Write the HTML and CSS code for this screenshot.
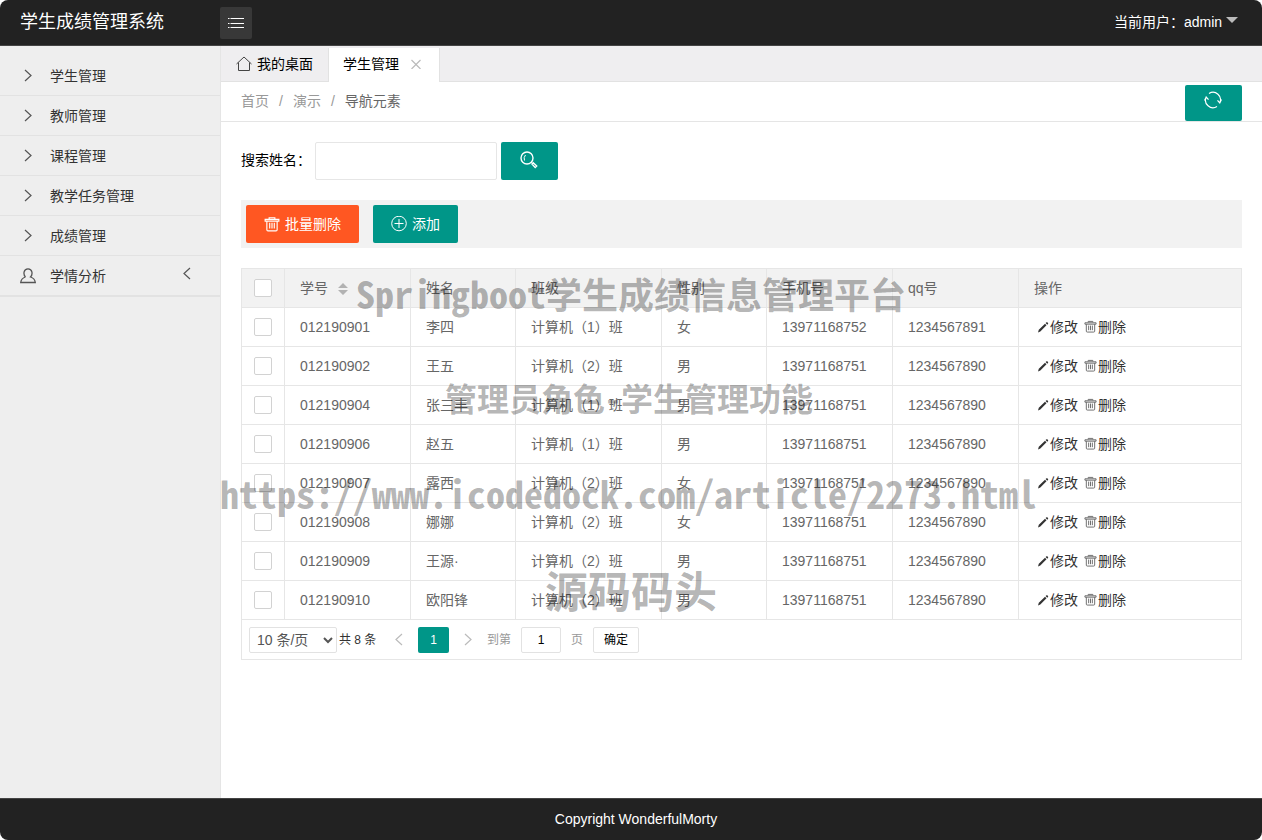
FILE: index.html
```html
<!DOCTYPE html>
<html lang="zh-CN">
<head>
<meta charset="utf-8">
<title>学生成绩管理系统</title>
<link rel="stylesheet" href="styles.css">
</head>
<body>
<svg class="defs" aria-hidden="true">
  <symbol id="right" viewBox="0 0 16 16"><path d="M5 2l6 5.500-6 5.500" fill="none" stroke="currentColor" stroke-width="1.200"/></symbol>
  <symbol id="left" viewBox="0 0 16 16"><path d="M11 2L5 7.500l6 5.500" fill="none" stroke="currentColor" stroke-width="1.200"/></symbol>
  <symbol id="pencil" viewBox="0 0 14 14"><path d="M2 12.500l.8-2.700L9 3.700l1.500 1.500-6.200 6.200zM9.600 3.100l.9-.8q.4-.3.800 0l.7.7q.4.400 0 .9l-.8.800z" fill="currentColor"/></symbol>
  <symbol id="trash" viewBox="0 0 14 14"><path d="M4.500 2.500v-1h5v1M1 3h12v1.500H1zM2.500 4.500v7.500q0 1 1 1h7q1 0 1-1V4.500M5 6v5M7 6v5M9 6v5" fill="none" stroke="currentColor"/></symbol>
</svg>
<header class="topbar">
  <h1 class="brand">学生成绩管理系统</h1>
  <button class="menu-toggle" aria-label="切换菜单">
    <svg viewBox="0 0 18 12"><path d="M3.500 1.500H17M3.500 6.500H17M3.500 10.500H17M1 1.500h1.500M1 6.500h1.500M1 10.500h1.500" stroke="currentColor" fill="none"/></svg>
  </button>
  <a class="user" href="#">当前用户：admin <span class="caret"></span></a>
</header>
<div class="layout">
  <nav class="sidebar">
    <a href="#"><svg><use href="#right"/></svg>学生管理</a>
    <a href="#"><svg><use href="#right"/></svg>教师管理</a>
    <a href="#"><svg><use href="#right"/></svg>课程管理</a>
    <a href="#"><svg><use href="#right"/></svg>教学任务管理</a>
    <a href="#"><svg><use href="#right"/></svg>成绩管理</a>
    <a href="#"><svg viewBox="0 0 16 16"><path d="M5.500 9C3 6.500 3.500 .8 8 .8S13 6.500 10.500 9c2.500.8 4.500 3 4.800 5.500H.7C1 12 3 9.800 5.500 9" fill="none" stroke="currentColor" stroke-width="1.300"/></svg>学情分析<svg class="fold"><use href="#left"/></svg></a>
  </nav>
  <main class="main">
    <div class="tabs">
      <a class="tab" href="#"><svg viewBox="0 0 16 16"><path d="M.5 8L8 1l7.500 7M2.500 6.500v8h11v-8" fill="none" stroke="currentColor"/></svg>我的桌面</a>
      <a class="tab active" href="#">学生管理<svg class="close" viewBox="0 0 10 10"><path d="M.5 1l9 9M9.500 1l-9 9" fill="none" stroke="currentColor" stroke-width="1.200"/></svg></a>
    </div>
    <div class="crumbs">
      <a href="#">首页</a><span>/</span><a href="#">演示</a><span>/</span><a class="current" href="#">导航元素</a>
      <button class="btn icon-btn refresh" aria-label="刷新"><svg viewBox="0 0 18 18"><path d="M5 2.500A7.500 7.500 0 0 1 15.800 12M13 15.500A7.500 7.500 0 0 1 2.200 6M.5 9.500l1.700-3.500 2.300 2.700M17.500 8.500L15.800 12l-2.300-2.700" fill="none" stroke="currentColor" stroke-width="1.200"/></svg></button>
    </div>
    <div class="content">
      <form class="search">
        <label for="name">搜索姓名：</label>
        <input id="name" type="text">
        <button class="btn icon-btn" type="button" aria-label="搜索"><svg viewBox="0 0 18 18"><circle cx="7" cy="7" r="6" fill="none" stroke="currentColor" stroke-width="1.400"/><path d="M4.500 9.500Q3.300 6.500 5.500 4M11.200 11.200l1.300 1.300" fill="none" stroke="currentColor"/><path d="M12 13l1.200-1.200 3.500 3.300-1.500 1.500z" fill="none" stroke="currentColor" stroke-width="1.400"/></svg></button>
      </form>
      <div class="toolbar">
        <button class="btn danger"><svg><use href="#trash"/></svg>批量删除</button>
        <button class="btn"><svg viewBox="0 0 16 16"><circle cx="8" cy="7.500" r="7.300" fill="none" stroke="currentColor"/><path d="M8 3v9M3.500 7.500h9" stroke="currentColor"/></svg>添加</button>
      </div>
      <section class="grid">
        <table>
          <colgroup><col class="w-check"><col class="w-long"><col class="w-short"><col class="w-class"><col class="w-short"><col class="w-long"><col class="w-long"><col></colgroup>
          <thead><tr><th><input type="checkbox" aria-label="全选"></th><th>学号<svg class="sort" viewBox="0 0 10 12"><path d="M0 5l5-5 5 5zM0 7h10l-5 5z" fill="currentColor"/></svg></th><th>姓名</th><th>班级</th><th>性别</th><th>手机号</th><th>qq号</th><th>操作</th></tr></thead>
          <tbody>
            <tr><td><input type="checkbox" aria-label="选择"></td><td>012190901</td><td>李四</td><td>计算机（1）班</td><td>女</td><td>13971168752</td><td>1234567891</td><td><a href="#"><svg><use href="#pencil"/></svg>修改</a><a href="#"><svg class="bin"><use href="#trash"/></svg>删除</a></td></tr>
            <tr><td><input type="checkbox" aria-label="选择"></td><td>012190902</td><td>王五</td><td>计算机（2）班</td><td>男</td><td>13971168751</td><td>1234567890</td><td><a href="#"><svg><use href="#pencil"/></svg>修改</a><a href="#"><svg class="bin"><use href="#trash"/></svg>删除</a></td></tr>
            <tr><td><input type="checkbox" aria-label="选择"></td><td>012190904</td><td>张三丰</td><td>计算机（1）班</td><td>男</td><td>13971168751</td><td>1234567890</td><td><a href="#"><svg><use href="#pencil"/></svg>修改</a><a href="#"><svg class="bin"><use href="#trash"/></svg>删除</a></td></tr>
            <tr><td><input type="checkbox" aria-label="选择"></td><td>012190906</td><td>赵五</td><td>计算机（1）班</td><td>男</td><td>13971168751</td><td>1234567890</td><td><a href="#"><svg><use href="#pencil"/></svg>修改</a><a href="#"><svg class="bin"><use href="#trash"/></svg>删除</a></td></tr>
            <tr><td><input type="checkbox" aria-label="选择"></td><td>012190907</td><td>露西</td><td>计算机（2）班</td><td>女</td><td>13971168751</td><td>1234567890</td><td><a href="#"><svg><use href="#pencil"/></svg>修改</a><a href="#"><svg class="bin"><use href="#trash"/></svg>删除</a></td></tr>
            <tr><td><input type="checkbox" aria-label="选择"></td><td>012190908</td><td>娜娜</td><td>计算机（2）班</td><td>女</td><td>13971168751</td><td>1234567890</td><td><a href="#"><svg><use href="#pencil"/></svg>修改</a><a href="#"><svg class="bin"><use href="#trash"/></svg>删除</a></td></tr>
            <tr><td><input type="checkbox" aria-label="选择"></td><td>012190909</td><td>王源·</td><td>计算机（2）班</td><td>男</td><td>13971168751</td><td>1234567890</td><td><a href="#"><svg><use href="#pencil"/></svg>修改</a><a href="#"><svg class="bin"><use href="#trash"/></svg>删除</a></td></tr>
            <tr><td><input type="checkbox" aria-label="选择"></td><td>012190910</td><td>欧阳锋</td><td>计算机（2）班</td><td>男</td><td>13971168751</td><td>1234567890</td><td><a href="#"><svg><use href="#pencil"/></svg>修改</a><a href="#"><svg class="bin"><use href="#trash"/></svg>删除</a></td></tr>
          </tbody>
        </table>
        <div class="pager">
          <select aria-label="每页条数"><option>10 条/页</option></select>
          <span class="total">共 8 条</span>
          <button class="arrow" aria-label="上一页"><svg><use href="#left"/></svg></button>
          <button class="page">1</button>
          <button class="arrow" aria-label="下一页"><svg><use href="#right"/></svg></button>
          <label for="page">到第</label>
          <input id="page" type="text" value="1">
          <label for="page">页</label>
          <button class="go">确定</button>
        </div>
      </section>
    </div>
  </main>
</div>
<footer class="footer">Copyright WonderfulMorty</footer>
<div class="watermark w1"><span>Springboot</span>学生成绩信息管理平台</div>
<div class="watermark w2">管理员角色-学生管理功能</div>
<div class="watermark w3"><span>https://www.icodedock.com/article/2273.html</span></div>
<div class="watermark w4">源码码头</div>
</body>
</html>
```
FILE: styles.css
```css
* { box-sizing: border-box; }
html { background: #fff; }
body {
  position: relative;
  margin: 0;
  min-height: 100vh;
  display: flex;
  flex-direction: column;
  border-radius: 8px;
  overflow: hidden;
  font: 14px/20px "Liberation Sans", "Noto Sans CJK SC", sans-serif;
  color: #000;
}
button, input, select { font: inherit; margin: 0; }
button { border: 0; padding: 0; cursor: pointer; }
a { color: inherit; text-decoration: none; }
svg { width: 16px; height: 16px; flex: none; }
.defs { position: absolute; width: 0; height: 0; }

.topbar {
  display: flex;
  height: 46px;
  background: #222;
  border-bottom: 1px solid #444;
  color: #fff;
}
.brand { width: 220px; margin: 0; padding-left: 20px; font-size: 18px; font-weight: 400; line-height: 44px; }
.menu-toggle {
  display: grid;
  place-items: center;
  width: 32px;
  height: 32px;
  margin-top: 7px;
  border-radius: 2px;
  background: #383838;
  color: #fff;
}
.menu-toggle svg { width: 18px; height: 12px; }
.user { margin-left: auto; padding-right: 24px; line-height: 45px; }
.caret {
  display: inline-block;
  border: 6px solid transparent;
  border-top-color: #bbb;
  border-bottom: 0;
  vertical-align: 4px;
}

.layout { flex: 1; display: flex; }
.sidebar { width: 221px; padding-top: 10px; background: #eee; border-right: 1px solid #e5e5e5; color: #333; }
.sidebar a {
  display: flex;
  align-items: center;
  gap: 14px;
  height: 40px;
  padding: 0 25px 0 20px;
  border-bottom: 1px solid #e2e2e2;
}
.sidebar a:last-child { height: 41px; border-bottom-width: 2px; }
.sidebar svg { color: #555; }
.sidebar .fold { margin: 0 0 4px auto; }

.main { flex: 1; min-width: 0; }
.tabs { display: flex; height: 36px; padding-top: 2px; background: #efeef0; border-bottom: 1px solid #e2e2e2; }
.tab { display: flex; align-items: center; gap: 5px; height: 33px; padding: 0 15px 2px; border-right: 1px solid #e2e2e2; }
.tab svg { color: #444; }
.tab.active { height: 34px; gap: 12px; padding: 0 18px 2px 14px; background: #fff; }
.tab .close { width: 10px; height: 10px; color: #bbb; }
.crumbs {
  display: flex;
  align-items: center;
  gap: 10px;
  height: 40px;
  padding: 0 20px 2px;
  border-bottom: 1px solid #e5e5e5;
  color: #999;
}
.crumbs .current { color: #666; }

.btn {
  display: inline-flex;
  align-items: center;
  justify-content: center;
  gap: 5px;
  height: 38px;
  padding: 0 18px;
  border-radius: 2px;
  background: #009688;
  color: #fff;
}
.btn.danger { background: #ff5722; }
.icon-btn { width: 57px; padding: 0 2px 2px 0; }
.icon-btn svg { width: 18px; height: 18px; }
.refresh { align-self: flex-start; height: 36px; margin: 3px 0 0 auto; padding-bottom: 7px; }

.content { padding: 20px; }
.search { display: flex; align-items: center; gap: 4px; }
.search label { width: 70px; white-space: nowrap; padding-bottom: 2px; }
.search input { width: 182px; height: 38px; padding: 0 10px; border: 1px solid #e6e6e6; border-radius: 2px; }
.toolbar { display: flex; gap: 14px; margin-top: 20px; padding: 5px; background: #f2f2f2; }

.grid { margin-top: 20px; border: 1px solid #e6e6e6; color: #666; }
table { width: 100%; table-layout: fixed; border-collapse: separate; border-spacing: 0; }
th, td {
  height: 39px;
  padding: 0 15px;
  border-right: 1px solid #e6e6e6;
  border-bottom: 1px solid #e6e6e6;
  font-weight: 400;
  text-align: left;
  white-space: nowrap;
}
th { background: #f2f2f2; }
th:last-child, td:last-child { border-right: 0; }
th:first-child, td:first-child { padding: 0 0 0 12px; }
.w-check { width: 43px; }
.w-short { width: 105px; }
.w-long { width: 126px; }
.w-class { width: 146px; }
.grid input[type="checkbox"] {
  appearance: none;
  display: block;
  width: 18px;
  height: 18px;
  border: 1px solid #d2d2d2;
  border-radius: 2px;
  background: #fff;
}
.sort { width: 10px; height: 12px; margin-left: 10px; color: #b2b2b2; vertical-align: -2px; }
td a { color: #333; margin-right: 5px; }
td a svg { width: 14px; height: 14px; margin-left: 2px; vertical-align: -2px; }
td a .bin { width: 13px; height: 13px; margin: 0 1px; color: #666; vertical-align: -1px; }

.pager { display: flex; align-items: center; height: 39px; padding-left: 7px; font-size: 12px; color: #999; }
.pager select { width: 88px; height: 26px; margin-right: 2px; padding-left: 3px; border: 1px solid #e2e2e2; border-radius: 2px; background: #fff; color: #555; font-size: 14px; }
.total { width: 38px; color: #333; white-space: nowrap; }
.arrow { display: grid; place-items: center; width: 16px; margin: 0 11px 0 14px; background: none; color: #bbb; }
.page { width: 31px; height: 26px; border-radius: 2px; background: #009688; color: #fff; }
.page + .arrow { margin: 0 11px; }
.pager input { width: 40px; height: 26px; margin: 0 10px; padding: 0; text-align: center; border: 1px solid #e2e2e2; border-radius: 2px; }
.go { width: 46px; height: 26px; margin-left: 10px; border: 1px solid #e2e2e2; border-radius: 2px; background: #fff; color: #000; }

.footer { height: 42px; padding-left: 10px; background: #222; border-top: 1px solid #444; color: #fff; line-height: 41px; text-align: center; }

.watermark {
  position: absolute;
  color: rgba(0, 0, 0, .3);
  font-family: "Noto Sans Mono CJK SC", "Noto Sans CJK SC", monospace;
  font-weight: 700;
  line-height: 48px;
  white-space: nowrap;
  pointer-events: none;
}
.watermark span { font-size: 38px; }
.w1 { left: 356px; top: 269px; font-size: 36px; }
.w2 { left: 445px; top: 373px; font-size: 32px; }
.w3 { left: 220px; top: 469px; font-size: 38px; }
.w4 { left: 545px; top: 565px; font-size: 43px; }
```
